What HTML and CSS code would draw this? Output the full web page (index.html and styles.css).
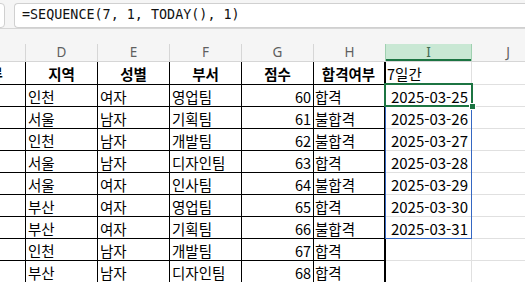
FILE: index.html
```html
<!DOCTYPE html>
<html lang="ko">
<head>
  <meta charset="UTF-8">
  <title>SEQUENCE</title>
  <link rel="stylesheet" href="styles.css">
</head>
<body>
  <div class="formula-bar">
    <div class="name-box"></div>
    <div class="formula">=SEQUENCE(7, 1, TODAY(), 1)</div>
  </div>
  <div class="gap"></div>

  <div class="sheet">
    <div class="col-heads">
      <div class="col-head">C</div>
      <div class="col-head">D</div>
      <div class="col-head">E</div>
      <div class="col-head">F</div>
      <div class="col-head">G</div>
      <div class="col-head">H</div>
      <div class="col-head picked">I</div>
      <div class="col-head last">J</div>
    </div>

    <div class="row first">
      <div class="cell head">분류</div>
      <div class="cell head">지역</div>
      <div class="cell head">성별</div>
      <div class="cell head">부서</div>
      <div class="cell head">점수</div>
      <div class="cell head edge">합격여부</div>
      <div class="cell free">7일간</div>
      <div class="cell open"></div>
    </div>
    <div class="row">
      <div class="cell"></div><div class="cell">인천</div><div class="cell">여자</div><div class="cell">영업팀</div>
      <div class="cell num">60</div><div class="cell edge">합격</div><div class="cell free num date">2025-03-25</div><div class="cell open"></div>
    </div>
    <div class="row">
      <div class="cell"></div><div class="cell">서울</div><div class="cell">남자</div><div class="cell">기획팀</div>
      <div class="cell num">61</div><div class="cell edge">불합격</div><div class="cell free num date">2025-03-26</div><div class="cell open"></div>
    </div>
    <div class="row">
      <div class="cell"></div><div class="cell">인천</div><div class="cell">남자</div><div class="cell">개발팀</div>
      <div class="cell num">62</div><div class="cell edge">불합격</div><div class="cell free num date">2025-03-27</div><div class="cell open"></div>
    </div>
    <div class="row">
      <div class="cell"></div><div class="cell">서울</div><div class="cell">남자</div><div class="cell">디자인팀</div>
      <div class="cell num">63</div><div class="cell edge">합격</div><div class="cell free num date">2025-03-28</div><div class="cell open"></div>
    </div>
    <div class="row">
      <div class="cell"></div><div class="cell">서울</div><div class="cell">여자</div><div class="cell">인사팀</div>
      <div class="cell num">64</div><div class="cell edge">불합격</div><div class="cell free num date">2025-03-29</div><div class="cell open"></div>
    </div>
    <div class="row">
      <div class="cell"></div><div class="cell">부산</div><div class="cell">여자</div><div class="cell">영업팀</div>
      <div class="cell num">65</div><div class="cell edge">합격</div><div class="cell free num date">2025-03-30</div><div class="cell open"></div>
    </div>
    <div class="row">
      <div class="cell"></div><div class="cell">부산</div><div class="cell">여자</div><div class="cell">기획팀</div>
      <div class="cell num">66</div><div class="cell edge">불합격</div><div class="cell free num date">2025-03-31</div><div class="cell open"></div>
    </div>
    <div class="row">
      <div class="cell"></div><div class="cell">인천</div><div class="cell">남자</div><div class="cell">개발팀</div>
      <div class="cell num">67</div><div class="cell edge">합격</div><div class="cell free"></div><div class="cell open"></div>
    </div>
    <div class="row">
      <div class="cell"></div><div class="cell">부산</div><div class="cell">남자</div><div class="cell">디자인팀</div>
      <div class="cell num">68</div><div class="cell edge">합격</div><div class="cell free"></div><div class="cell open"></div>
    </div>

    <!-- spill range and active cell sit over the grid -->
    <div class="spill"></div>
    <div class="active"><span class="handle"></span></div>
  </div>
</body>
</html>
```

FILE: styles.css
```css
body {
  margin: 0;
  width: 525px;
  height: 282px;
  overflow: hidden;
  background: #fff;
  font-family: "Noto Sans CJK KR", "Noto Sans", sans-serif;
  color: #000;
}

.formula-bar {
  display: flex;
  gap: 9px;
  height: 25px;
  padding-top: 3px;
  background: #f5f5f5;
  border-bottom: 1px solid #d6d6d6;
}

.name-box {
  width: 4px;
  margin-left: -1px;
  height: 23px;
  background: #fff;
  border: 1px solid #d0d0d0;
  border-radius: 0 4px 4px 0;
}

.formula {
  flex: 1;
  height: 23px;
  background: #fff;
  border: 1px solid #d0d0d0;
  border-right: none;
  border-radius: 4px 0 0 4px;
  padding-left: 7px;
  font-family: "DejaVu Sans Mono", "Liberation Mono", monospace;
  font-size: 13.4px;
  line-height: 22px;
  color: #111;
}

.gap {
  height: 15px;
  background: #f5f5f5;
}

.sheet {
  position: relative;
  margin-left: -46px;
}

.col-heads, .row {
  display: grid;
  grid-template-columns: 72px 72px 72px 72px 72px 72px 86px 72px;
}

.col-heads {
  height: 17px;
  background: #f5f5f5;
  border-bottom: 1px solid #d6d6d6;
}

.col-head {
  border-right: 1px solid #d6d6d6;
  text-align: center;
  font-family: "Noto Sans", sans-serif;
  font-size: 13.5px;
  line-height: 17px;
  color: #5f5f5f;
}

.col-head.picked {
  background: #c9e8d4;
  border-right-color: #9fd0b0;
  border-left: 1px solid #9fd0b0;
  margin-left: -1px;
  box-shadow: inset 0 -2px 0 #1c7442;
  color: #3f6a4f;
}

.col-head.last { border-right: none; }

.row { height: 22px; }
.row.first { height: 23px; }

.cell {
  border-right: 1px solid #000;
  border-bottom: 1px solid #000;
  padding: 0 2px;
  font-size: 14.5px;
  line-height: 23px;
  white-space: nowrap;
  overflow: hidden;
}

.cell.head {
  text-align: center;
  font-weight: 700;
}

.cell.num { text-align: right; }

.cell.edge {
  border-right-width: 2px;
  padding-left: 1px;
}

.cell.free {
  border-right-color: #e0e0e0;
  border-bottom-color: #e0e0e0;
  padding: 0 3px 0 1px;
}

.cell.date { font-size: 15px; }

.cell.open {
  border-right: none;
  border-bottom-color: #e0e0e0;
}

.spill {
  position: absolute;
  left: 431px;
  top: 40px;
  width: 85px;
  height: 153px;
  border: 1px solid #3567c2;
}

.active {
  position: absolute;
  left: 430px;
  top: 39px;
  width: 85px;
  height: 20px;
  border: 2px solid #1c7442;
}

.handle {
  position: absolute;
  right: -5px;
  bottom: -5px;
  width: 5px;
  height: 5px;
  background: #1c7442;
  border: 1px solid #fff;
}
```
